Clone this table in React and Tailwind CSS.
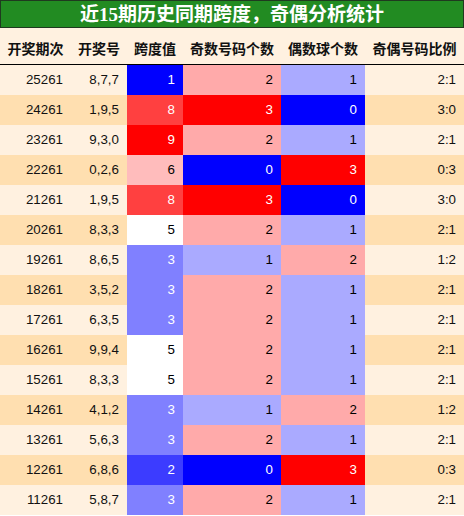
import React from 'react';

const rows = [
  ['25261', '8,7,7', 1, 2, 1, '2:1'],
  ['24261', '1,9,5', 8, 3, 0, '3:0'],
  ['23261', '9,3,0', 9, 2, 1, '2:1'],
  ['22261', '0,2,6', 6, 0, 3, '0:3'],
  ['21261', '1,9,5', 8, 3, 0, '3:0'],
  ['20261', '8,3,3', 5, 2, 1, '2:1'],
  ['19261', '8,6,5', 3, 1, 2, '1:2'],
  ['18261', '3,5,2', 3, 2, 1, '2:1'],
  ['17261', '6,3,5', 3, 2, 1, '2:1'],
  ['16261', '9,9,4', 5, 2, 1, '2:1'],
  ['15261', '8,3,3', 5, 2, 1, '2:1'],
  ['14261', '4,1,2', 3, 1, 2, '1:2'],
  ['13261', '5,6,3', 3, 2, 1, '2:1'],
  ['12261', '6,8,6', 2, 0, 3, '0:3'],
  ['11261', '5,8,7', 3, 2, 1, '2:1'],
];

// span heat colours
const spanCls = {
  1: 'bg-[#0000ff] text-white',
  2: 'bg-[#3c3cff] text-white',
  3: 'bg-[#8080ff] text-white',
  5: 'bg-white text-black',
  6: 'bg-[#ffbcbc] text-black',
  8: 'bg-[#ff4040] text-white',
  9: 'bg-[#ff0000] text-white',
};

const countCls = {
  0: 'bg-[#0000ff] text-white',
  1: 'bg-[#aaaaff] text-black',
  2: 'bg-[#ffaaaa] text-black',
  3: 'bg-[#ff0000] text-white',
};

const headers = ['开奖期次', '开奖号', '跨度值', '奇数号码个数', '偶数球个数', '奇偶号码比例'];

const cell = 'flex items-center justify-end pr-2 h-[30px]';

export default function App() {
  return (
    <div className="w-[464px] h-[516px] bg-white" style={{ fontFamily: '"Liberation Sans", "Noto Sans CJK SC", sans-serif' }}>
      <div className="h-[28px] bg-[#228b22] border border-[#1f3a1f] flex items-center justify-center">
        <span className="text-white font-bold text-[19px] leading-none" style={{ fontFamily: '"Liberation Serif", "Noto Sans CJK SC", serif' }}>
          近15期历史同期跨度，奇偶分析统计
        </span>
      </div>
      <div className="grid grid-cols-[71px_56px_56px_98px_84px_99px] bg-[#fff1e0] h-[37px] border-b border-black">
        {headers.map((h) => (
          <div key={h} className="flex items-center justify-center pt-1 text-[14px] font-bold text-[#111]" style={{ fontFamily: '"Noto Sans CJK SC", sans-serif' }}>
            {h}
          </div>
        ))}
      </div>
      {rows.map((r, i) => (
        <div
          key={r[0]}
          className={
            'grid grid-cols-[71px_56px_56px_98px_84px_99px] text-[13.33px] text-[#111] ' +
            (i % 2 === 0 ? 'bg-[#fff1e0]' : 'bg-[#ffdfb0]')
          }
        >
          <div className={cell}>{r[0]}</div>
          <div className={cell}>{r[1]}</div>
          <div className={cell + ' ' + spanCls[r[2]]}>{r[2]}</div>
          <div className={cell + ' ' + countCls[r[3]]}>{r[3]}</div>
          <div className={cell + ' ' + countCls[r[4]]}>{r[4]}</div>
          <div className={cell}>{r[5]}</div>
        </div>
      ))}
    </div>
  );
}
